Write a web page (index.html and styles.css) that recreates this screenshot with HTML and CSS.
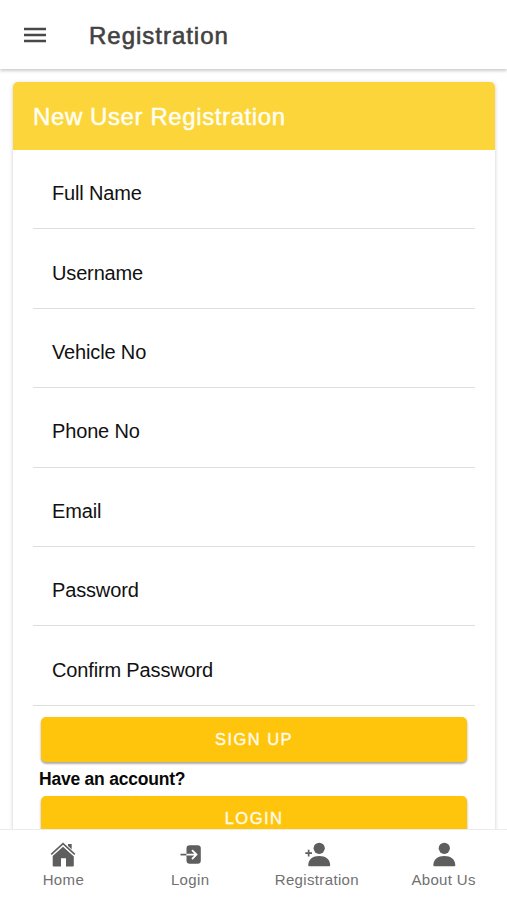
FILE: index.html
```html
<!DOCTYPE html>
<html lang="en">
<head>
<meta charset="utf-8">
<meta name="viewport" content="width=device-width, initial-scale=1">
<title>Registration</title>
<link rel="stylesheet" href="styles.css">
</head>
<body>
<div class="app">
  <header class="toolbar">
    <svg class="menu-icon" viewBox="0 0 24 18" aria-hidden="true"><path d="M1 3h22M1 9h22M1 15h22"/></svg>
    <h1 class="title">Registration</h1>
  </header>
  <main class="content">
    <section class="card">
      <h2 class="card-header"><span>New User Registration</span></h2>
      <form class="form">
        <div class="field"><label>Full Name</label></div>
        <div class="field"><label>Username</label></div>
        <div class="field"><label>Vehicle No</label></div>
        <div class="field"><label>Phone No</label></div>
        <div class="field"><label>Email</label></div>
        <div class="field"><label>Password</label></div>
        <div class="field"><label>Confirm Password</label></div>
        <button class="button" type="button">SIGN UP</button>
        <p class="prompt">Have an account?</p>
        <button class="button" type="button">LOGIN</button>
      </form>
    </section>
  </main>
  <nav class="tabs">
    <a class="tab">
      <svg class="tab-icon" viewBox="0 0 28 28" aria-hidden="true">
        <path d="M19 4h3.700v8.500L19 9z"/>
        <path class="roof-gap" d="M2.200 14.300 14 3.700l11.800 10.600"/>
        <path d="M14 6.700 24.800 16.400V25.500q0 1-1 1H17v-8.200h-5v8.200H4.700q-1 0-1-1V16z"/>
        <path class="roof" d="M2.200 14.300 14 3.700l11.800 10.600"/>
      </svg>
      <span>Home</span>
    </a>
    <a class="tab">
      <svg class="tab-icon" viewBox="0 0 28 28" aria-hidden="true">
        <rect x="10.500" y="5.300" width="14.300" height="18.500" rx="3.200"/>
        <path class="line" d="M4.500 14.600h6"/>
        <path class="cut" d="M10.500 14.600h9.500M16 10.200l4.500 4.400-4.500 4.400"/>
      </svg>
      <span>Login</span>
    </a>
    <a class="tab">
      <svg class="tab-icon" viewBox="0 0 28 28" aria-hidden="true">
        <circle cx="16.200" cy="8.300" r="5.600"/>
        <path d="M5.200 25c.5-5.800 4.500-8.900 11-8.900s10.500 3.100 11 8.900q.1 1.300-1.200 1.300H6.400q-1.300 0-1.200-1.300z"/>
        <path class="line" d="M2.300 13.200h6.700M5.650 9.800v6.800"/>
      </svg>
      <span>Registration</span>
    </a>
    <a class="tab">
      <svg class="tab-icon" viewBox="0 0 28 28" aria-hidden="true">
        <circle cx="14.300" cy="8.300" r="5.600"/>
        <path d="M3.300 25c.5-5.800 4.500-8.900 11-8.900s10.500 3.100 11 8.900q.1 1.300-1.200 1.300H4.500q-1.300 0-1.200-1.300z"/>
      </svg>
      <span>About Us</span>
    </a>
  </nav>
</div>
</body>
</html>
```
FILE: styles.css
```css
* {
  box-sizing: border-box;
}

body {
  margin: 0;
  background: #fff;
  color: #111;
  font-family: "Liberation Sans", Arial, sans-serif;
}

.app {
  display: flex;
  flex-direction: column;
  height: 900px;
  overflow: hidden;
}

.toolbar {
  z-index: 1;
  display: flex;
  flex: none;
  align-items: center;
  gap: 42px;
  height: 69px;
  padding: 1px 23px 0;
  background: #fff;
  box-shadow: 0 2px 3px rgba(0, 0, 0, .2);
}

.menu-icon {
  width: 24px;
  height: 18px;
  fill: none;
  stroke: #484848;
  stroke-width: 2.300;
}

.title {
  margin: 2px 0 0;
  color: #424242;
  font-size: 24px;
  font-weight: 400;
  line-height: 30px;
  letter-spacing: .98px;
  -webkit-text-stroke: .6px #424242;
}

.content {
  flex: 1;
  min-height: 0;
  padding: 13px 12.500px 0 13px;
  overflow: hidden;
}

.card {
  height: 820px;
  border-radius: 5px;
  background: #fff;
  box-shadow: 0 1px 4px rgba(0, 0, 0, .2);
}

.card-header {
  display: flex;
  align-items: center;
  height: 68px;
  margin: 0;
  padding: 2px 20px 0;
  border-radius: 5px 5px 0 0;
  background: #fbd539;
  color: #fffef0;
  font-size: 24px;
  font-weight: 400;
  letter-spacing: .6px;
  -webkit-text-stroke: .5px #fffef0;
}

.form {
  padding: 0 20px;
}

.field {
  display: flex;
  align-items: center;
  height: 79.400px;
  padding: 9px 19px 0;
  border-bottom: 1px solid #dedede;
  font-size: 20px;
  letter-spacing: -.15px;
}

.button {
  display: block;
  width: 425.500px;
  height: 45px;
  margin: 11px 0 0 8.300px;
  padding: 0;
  border: 0;
  border-radius: 5px;
  background: #ffc40c;
  box-shadow: 0 2px 2px rgba(0, 0, 0, .26), 0 1px 3px rgba(0, 0, 0, .14);
  color: #fffbe8;
  font: 400 16.500px "Liberation Sans", Arial, sans-serif;
  letter-spacing: 1.450px;
  -webkit-text-stroke: .4px #fffbe8;
}

.prompt {
  margin: 7.300px 0 -4px 6px;
  color: #080808;
  font-size: 17.500px;
  font-weight: 700;
  line-height: 20px;
  letter-spacing: -.22px;
}

.tabs {
  z-index: 1;
  display: grid;
  flex: none;
  grid-template-columns: repeat(4, 1fr);
  height: 71px;
  border-top: 1px solid #ececec;
  background: #fff;
}

.tab {
  display: flex;
  flex-direction: column;
  gap: 2px;
  align-items: center;
  padding-top: 10px;
  color: #707070;
  font-size: 15px;
  line-height: 20px;
  letter-spacing: .35px;
}

.tab-icon {
  width: 28px;
  height: 28px;
  fill: #5e5e5e;
}

.line {
  fill: none;
  stroke: #5e5e5e;
  stroke-width: 1.700;
}

.cut {
  fill: none;
  stroke: #fff;
  stroke-width: 1.800;
}

.roof-gap {
  fill: none;
  stroke: #fff;
  stroke-width: 3.400;
}

.roof {
  fill: none;
  stroke: #5e5e5e;
  stroke-width: 1.600;
}
```
